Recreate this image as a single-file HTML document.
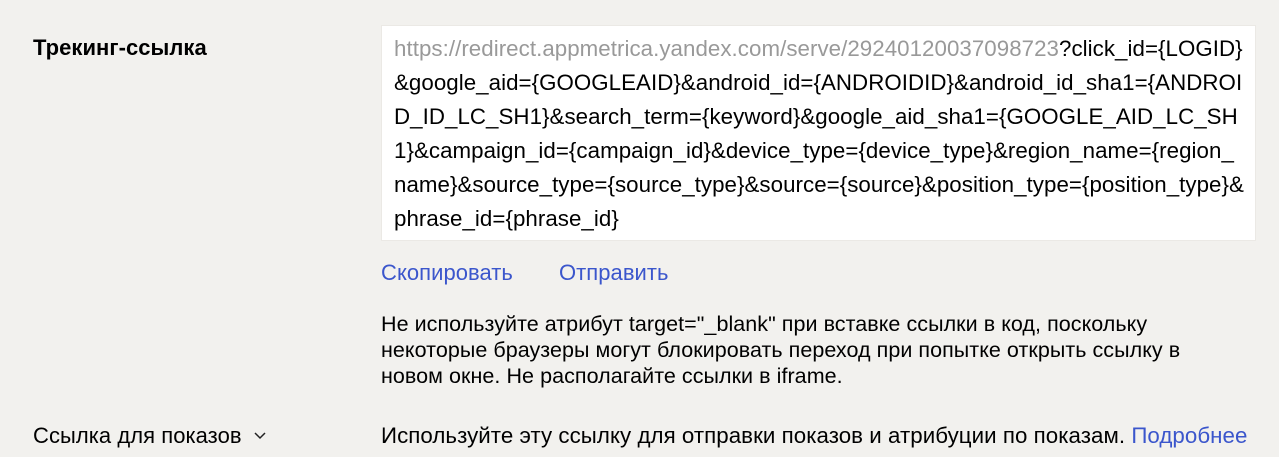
<!DOCTYPE html>
<html><head><meta charset="utf-8"><style>
body{margin:0;width:1279px;height:457px;background:#f2f1ee;font-family:"Liberation Sans",sans-serif;color:#000;position:relative;overflow:hidden;font-size:22px;letter-spacing:0.05px}
.a{position:absolute;white-space:nowrap}
.box{position:absolute;left:381px;top:25px;width:875px;height:216px;background:#fff;box-sizing:border-box;border:1px solid #ebe9e5;font-size:22.3px}
.box div{position:absolute;left:12px;white-space:nowrap}
.l{color:#3b56cc}
</style></head><body>
<div class="a" style="left:33px;top:35px;font-weight:bold">Трекинг-ссылка</div>
<div class="box">
<div style="top:10px"><span style="color:#999">https://redirect.appmetrica.yandex.com/serve/29240120037098723</span>?click_id={LOGID}</div>
<div style="top:44px">&amp;google_aid={GOOGLEAID}&amp;android_id={ANDROIDID}&amp;android_id_sha1={ANDROI</div>
<div style="top:78px">D_ID_LC_SH1}&amp;search_term={keyword}&amp;google_aid_sha1={GOOGLE_AID_LC_SH</div>
<div style="top:112px">1}&amp;campaign_id={campaign_id}&amp;device_type={device_type}&amp;region_name={region_</div>
<div style="top:146px">name}&amp;source_type={source_type}&amp;source={source}&amp;position_type={position_type}&amp;</div>
<div style="top:180px">phrase_id={phrase_id}</div>
</div>
<div class="a l" style="left:381px;top:260px">Скопировать</div>
<div class="a l" style="left:559px;top:260px">Отправить</div>
<div class="a" style="left:381px;top:311px;line-height:26px;font-size:21.5px">Не используйте атрибут target="_blank" при вставке ссылки в код, поскольку<br>некоторые браузеры могут блокировать переход при попытке открыть ссылку в<br>новом окне. Не располагайте ссылки в iframe.</div>
<div class="a" style="left:33px;top:423px">Ссылка для показов</div>
<svg class="a" style="left:253px;top:431px" width="14" height="10"><path d="M2 2l5 5 5-5" fill="none" stroke="#222" stroke-width="1.5"/></svg>
<div class="a" style="left:381px;top:423px;font-size:22.3px">Используйте эту ссылку для отправки показов и атрибуции по показам. <span class="l">Подробнее</span></div>
</body></html>
